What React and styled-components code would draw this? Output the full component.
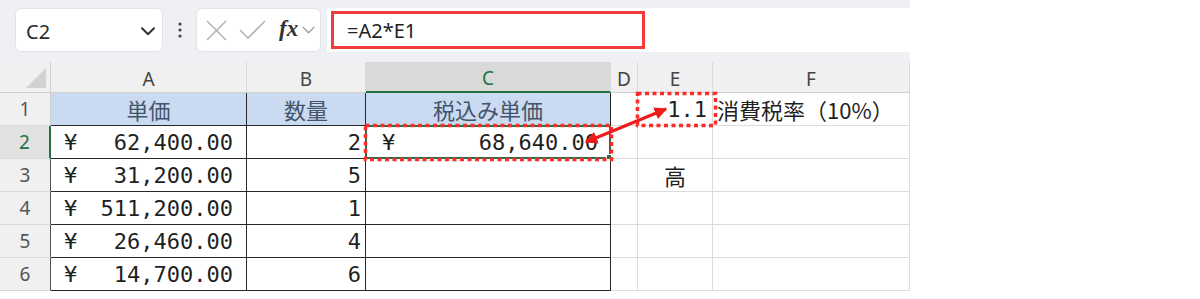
import React from "react";
import styled, { createGlobalStyle } from "styled-components";

const GlobalStyle = createGlobalStyle`
  html, body { margin: 0; padding: 0; background: #ffffff; }
  body { font-family: "Noto Sans", "Noto Sans CJK JP", sans-serif; }
`;

const Frame = styled.div`
  width: 910px;
`;

const Toolbar = styled.div`
  height: 62px;
  box-sizing: border-box;
  display: flex;
  align-items: flex-start;
  padding: 8px 0 0 15px;
  background: #eef0f3;
`;

const Box = styled.div`
  height: 44px;
  box-sizing: border-box;
  background: #ffffff;
  border: 1px solid #e2e4e8;
  border-radius: 6px;
  display: flex;
  align-items: center;
`;

const NameBox = styled(Box)`
  width: 148px;
  padding: 2px 7px 0 10px;
  justify-content: space-between;
`;

const NameText = styled.span`
  font-family: "Noto Sans", sans-serif;
  font-size: 20px;
  color: #2b2b2b;
`;

const DotsWrap = styled.div`
  width: 33px;
  height: 44px;
  display: flex;
  align-items: center;
  justify-content: center;
`;

const FxBox = styled(Box)`
  width: 125px;
  padding: 0 0 0 9px;
`;

const FxText = styled.span`
  font-family: "Liberation Serif", "DejaVu Serif", serif;
  font-style: italic;
  font-weight: bold;
  font-size: 23px;
  color: #333333;
  margin: 0 4px 2px 12px;
`;

const FormulaBar = styled.div`
  flex: 1;
  height: 44px;
  margin-left: 6px;
  background: #ffffff;
  display: flex;
  align-items: center;
  padding-left: 4px;
  box-sizing: border-box;
`;

const FormulaInput = styled.div`
  width: 314px;
  height: 38px;
  box-sizing: border-box;
  border: 3px solid #f03c3c;
  display: flex;
  align-items: center;
  padding-left: 13px;
  font-family: "Noto Sans", sans-serif;
  font-size: 20px;
  color: #222222;
`;

const SheetWrap = styled.div`
  position: relative;
`;

const Grid = styled.div`
  display: grid;
  grid-template-columns: 51px 196px 119px 245px 27px 75px 197px;
  grid-template-rows: 31px repeat(6, 33px);
`;

const Corner = styled.div`
  box-sizing: border-box;
  background: #f0f0f0;
  border-right: 1px solid #d0d0d0;
  border-bottom: 1px solid #d0d0d0;
  display: flex;
  align-items: flex-end;
  justify-content: flex-end;
  padding: 0 4px 4px 0;
`;

const ColHeader = styled.div`
  box-sizing: border-box;
  background: ${(p) => (p.$selected ? "#d9d9d9" : "#f0f0f0")};
  border-right: 1px solid #dadada;
  border-bottom: ${(p) => (p.$selected ? "2px solid #217346" : "1px solid #d0d0d0")};
  display: flex;
  align-items: center;
  justify-content: center;
  font-family: "Noto Sans", sans-serif;
  font-size: 19px;
  color: ${(p) => (p.$selected ? "#217346" : "#444444")};
  padding-top: 3px;
`;

const RowHeader = styled.div`
  box-sizing: border-box;
  background: ${(p) => (p.$selected ? "#e2e2e2" : "#f0f0f0")};
  border-bottom: 1px solid #d8d8d8;
  border-right: ${(p) =>
    p.$selected ? "2px solid #217346" : p.$dark ? "1px solid #555555" : "1px solid #cfcfcf"};
  display: flex;
  align-items: center;
  justify-content: center;
  font-family: "Noto Sans", sans-serif;
  font-size: 19px;
  color: ${(p) => (p.$selected ? "#217346" : "#555555")};
`;

const Cell = styled.div`
  box-sizing: border-box;
  position: relative;
  display: flex;
  align-items: center;
  justify-content: ${(p) => p.$justify || "flex-start"};
  padding: ${(p) => p.$pad || "0 6px"};
  background: ${(p) => p.$bg || "#ffffff"};
  border-right: 1px solid ${(p) => (p.$table ? "#262626" : "#dcdcdc")};
  border-bottom: 1px solid ${(p) => (p.$table ? "#262626" : "#dcdcdc")};
  font-family: "DejaVu Sans Mono", "Noto Sans CJK JP", monospace;
  font-size: 22px;
  color: #1f1f1f;
  white-space: nowrap;
`;

const Jp = styled.span`
  font-family: "Noto Sans CJK JP", sans-serif;
  font-size: 22px;
  color: ${(p) => p.$color || "#1f1f1f"};
`;

const Selection = styled.div`
  position: absolute;
  top: -1px;
  left: -1px;
  right: -1px;
  bottom: -1px;
  border: 2px solid #217346;
  pointer-events: none;
`;

const FillHandle = styled.div`
  position: absolute;
  right: -5px;
  bottom: -5px;
  width: 7px;
  height: 7px;
  background: #217346;
  border: 1px solid #ffffff;
`;

const Overlay = styled.svg`
  position: absolute;
  left: 0;
  top: 0;
  pointer-events: none;
`;

const Chevron = ({ size = 14, color = "#333", sw = 2 }) => (
  <svg width={size} height={size * 0.6} viewBox="0 0 14 8">
    <polyline points="1,1 7,7 13,1" fill="none" stroke={color} strokeWidth={sw} strokeLinecap="round" strokeLinejoin="round" />
  </svg>
);

const HEAD_BG = "#c9daf1";
const HEAD_TXT = "#44546a";

const amounts = [
  { n: 2, a: "62,400.00", b: "2" },
  { n: 3, a: "31,200.00", b: "5" },
  { n: 4, a: "511,200.00", b: "1" },
  { n: 5, a: "26,460.00", b: "4" },
  { n: 6, a: "14,700.00", b: "6" },
];

export default function App() {
  return (
    <>
      <GlobalStyle />
      <Frame>
        <Toolbar>
          <NameBox>
            <NameText>C2</NameText>
            <Chevron size={14} color="#333" sw={2} />
          </NameBox>
          <DotsWrap>
            <svg width="4" height="16" viewBox="0 0 4 16">
              <circle cx="2" cy="2" r="1.6" fill="#444" />
              <circle cx="2" cy="8" r="1.6" fill="#444" />
              <circle cx="2" cy="14" r="1.6" fill="#444" />
            </svg>
          </DotsWrap>
          <FxBox>
            <svg width="21" height="21" viewBox="0 0 21 21">
              <line x1="1" y1="1" x2="20" y2="20" stroke="#b4b4b4" strokeWidth="1.6" />
              <line x1="20" y1="1" x2="1" y2="20" stroke="#b4b4b4" strokeWidth="1.6" />
            </svg>
            <svg width="28" height="20" viewBox="0 0 28 20" style={{ marginLeft: 12 }}>
              <polyline points="1,10 9,18 26,1" fill="none" stroke="#b4b4b4" strokeWidth="1.6" />
            </svg>
            <FxText>fx</FxText>
            <Chevron size={13} color="#9a9a9a" sw={1.4} />
          </FxBox>
          <FormulaBar>
            <FormulaInput>=A2*E1</FormulaInput>
          </FormulaBar>
        </Toolbar>
        <SheetWrap>
          <Grid>
            <Corner>
              <svg width="20" height="20" viewBox="0 0 20 20">
                <polygon points="0,20 20,0 20,20" fill="#d2d2d2" />
              </svg>
            </Corner>
            <ColHeader>A</ColHeader>
            <ColHeader>B</ColHeader>
            <ColHeader $selected>C</ColHeader>
            <ColHeader>D</ColHeader>
            <ColHeader>E</ColHeader>
            <ColHeader>F</ColHeader>

            <RowHeader>1</RowHeader>
            <Cell $table $bg={HEAD_BG} $justify="center">
              <Jp $color={HEAD_TXT}>単価</Jp>
            </Cell>
            <Cell $table $bg={HEAD_BG} $justify="center">
              <Jp $color={HEAD_TXT}>数量</Jp>
            </Cell>
            <Cell $table $bg={HEAD_BG} $justify="center">
              <Jp $color={HEAD_TXT}>税込み単価</Jp>
            </Cell>
            <Cell />
            <Cell $justify="flex-end" $pad="0 5px 0 0">1.1</Cell>
            <Cell $pad="0 0 0 4px">
              <Jp>消費税率（10%）</Jp>
            </Cell>

            {amounts.map((r) => (
              <React.Fragment key={r.n}>
                <RowHeader $selected={r.n === 2} $dark={r.n !== 2}>
                  {r.n}
                </RowHeader>
                <Cell $table $justify="space-between" $pad="0 13px 0 13px">
                  <span>¥</span>
                  <span>{r.a}</span>
                </Cell>
                <Cell $table $justify="flex-end" $pad="0 4px 0 0">
                  {r.b}
                </Cell>
                {r.n === 2 ? (
                  <Cell $table $justify="space-between" $pad="0 12px 0 16px">
                    <span>¥</span>
                    <span>68,640.00</span>
                    <Selection />
                    <FillHandle />
                  </Cell>
                ) : (
                  <Cell $table />
                )}
                <Cell />
                <Cell $justify="center">{r.n === 3 ? <Jp>高</Jp> : null}</Cell>
                <Cell />
              </React.Fragment>
            ))}
          </Grid>
          <Overlay width="910" height="237" viewBox="0 0 910 237">
            <defs>
              <marker id="ah" viewBox="0 0 10 10" refX="9" refY="5" markerWidth="4.2" markerHeight="4.2" orient="auto-start-reverse">
                <path d="M0,0 L10,5 L0,10 z" fill="#ee1b1b" />
              </marker>
            </defs>
            <rect x="365.5" y="63.5" width="246" height="34" fill="none" stroke="#ff2b2b" strokeWidth="3.5" strokeDasharray="4 3.5" />
            <rect x="637.5" y="31.5" width="78" height="32" fill="none" stroke="#ff2b2b" strokeWidth="3.5" strokeDasharray="4 3.5" />
            <line x1="586" y1="80" x2="666" y2="47" stroke="#ee1b1b" strokeWidth="3" markerStart="url(#ah)" markerEnd="url(#ah)" />
          </Overlay>
        </SheetWrap>
      </Frame>
    </>
  );
}
